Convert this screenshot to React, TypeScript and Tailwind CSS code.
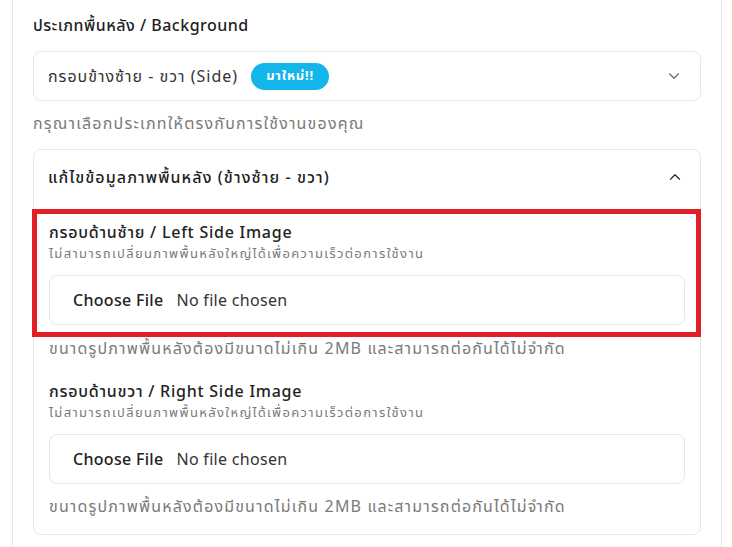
import { ChevronDown, ChevronUp } from "lucide-react";

const FONT = { fontFamily: '"Noto Sans", "Noto Sans Thai", "DejaVu Sans", sans-serif' };

function FileBox() {
  return (
    <div className="mt-[13px] flex h-[50px] items-center rounded-[8px] border border-[#e6e6e6] bg-white pl-[23px] text-[16px] tracking-[0.3px]">
      <span className="font-medium text-[#222]">Choose File</span>
      <span className="ml-[13px] text-[#333]">No file chosen</span>
    </div>
  );
}

function SideField({ title, highlight }: { title: string; highlight?: boolean }) {
  return (
    <div className="relative">
      {highlight && (
        <div className="pointer-events-none absolute -top-[11px] -bottom-[12px] -left-[17px] -right-[16px] border-[5px] border-[#e21e26]" />
      )}
      <p className="text-[16px] leading-[24px] font-medium tracking-[0.75px] text-[#222]">{title}</p>
      <p className="text-[13px] leading-[18px] tracking-[1.35px] text-[#7a7a7a]">
        ไม่สามารถเปลี่ยนภาพพื้นหลังใหญ่ได้เพื่อความเร็วต่อการใช้งาน
      </p>
      <FileBox />
    </div>
  );
}

export default function App() {
  return (
    <div className="h-[547px] w-[732px] overflow-hidden bg-white" style={FONT}>
      <div className="ml-[12px] h-full w-[710px] border-x border-[#e5e5e5] px-[20px] pt-[13px]">
        <p className="text-[16px] leading-[24px] font-medium tracking-[0.5px] text-[#222]">ประเภทพื้นหลัง / Background</p>

        {/* select */}
        <div className="mt-[14px] flex h-[50px] items-center justify-between rounded-[8px] border border-[#e6e6e6] pl-[14px] pr-[17px]">
          <div className="flex items-center">
            <span className="text-[16px] tracking-[1px] text-[#333]">กรอบข้างซ้าย - ขวา (Side)</span>
            <span className="ml-[13px] flex h-[27px] items-center rounded-full bg-[#13b5ea] px-[15px] text-[13px] font-bold tracking-[0.8px] text-white">
              มาใหม่!!
            </span>
          </div>
          <ChevronDown className="h-[18px] w-[18px] text-[#666]" strokeWidth={1.5} />
        </div>
        <p className="mt-[10px] text-[16px] leading-[24px] tracking-[1.2px] text-[#7a7a7a]">
          กรุณาเลือกประเภทให้ตรงกับการใช้งานของคุณ
        </p>

        {/* accordion */}
        <div className="mt-[14px] rounded-[8px] border border-[#e6e6e6] pb-[16px]">
          <div className="flex h-[54px] items-center justify-between pl-[14px] pr-[16px]">
            <span className="text-[16px] font-medium tracking-[1.1px] text-[#222]">แก้ไขข้อมูลภาพพื้นหลัง (ข้างซ้าย - ขวา)</span>
            <ChevronUp className="h-[18px] w-[18px] text-[#222]" strokeWidth={1.5} />
          </div>
          <div className="mt-[16px] px-[15px]">
            <SideField title="กรอบด้านซ้าย / Left Side Image" highlight />
            <p className="mt-[11px] text-[16px] leading-[24px] tracking-[1.15px] text-[#7a7a7a]">
              ขนาดรูปภาพพื้นหลังต้องมีขนาดไม่เกิน 2MB และสามารถต่อกันได้ไม่จำกัด
            </p>
            <div className="mt-[19px]">
              <SideField title="กรอบด้านขวา / Right Side Image" />
            </div>
            <p className="mt-[10px] text-[16px] leading-[24px] tracking-[1.15px] text-[#7a7a7a]">
              ขนาดรูปภาพพื้นหลังต้องมีขนาดไม่เกิน 2MB และสามารถต่อกันได้ไม่จำกัด
            </p>
          </div>
        </div>
      </div>
    </div>
  );
}
